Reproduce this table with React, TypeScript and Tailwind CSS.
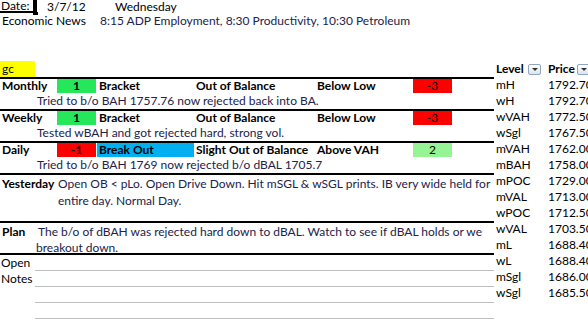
import clsx from "clsx";

type Band = {
  label: string;
  score: string;
  scoreBg: string;
  setup: string;
  setupBg?: string;
  balance: string;
  where: string;
  trend: string;
  trendBg: string;
  note: string;
};

const bands: Band[] = [
  {
    label: "Monthly",
    score: "1",
    scoreBg: "bg-[#26e65a]",
    setup: "Bracket",
    balance: "Out of Balance",
    where: "Below Low",
    trend: "-3",
    trendBg: "bg-[#ff0000]",
    note: "Tried to b/o BAH 1757.76 now rejected back into BA.",
  },
  {
    label: "Weekly",
    score: "1",
    scoreBg: "bg-[#26e65a]",
    setup: "Bracket",
    balance: "Out of Balance",
    where: "Below Low",
    trend: "-3",
    trendBg: "bg-[#ff0000]",
    note: "Tested wBAH and got rejected hard, strong vol.",
  },
  {
    label: "Daily",
    score: "-1",
    scoreBg: "bg-[#ff0000]",
    setup: "Break Out",
    setupBg: "bg-[#00b0f0]",
    balance: "Slight Out of Balance",
    where: "Above VAH",
    trend: "2",
    trendBg: "bg-[#95f595]",
    note: "Tried to b/o BAH 1769 now rejected b/o dBAL 1705.7",
  },
];

const levels = [
  ["mH", "1792.70"],
  ["wH", "1792.70"],
  ["wVAH", "1772.50"],
  ["wSgl", "1767.50"],
  ["mVAH", "1762.00"],
  ["mBAH", "1758.00"],
  ["mPOC", "1729.00"],
  ["mVAL", "1713.00"],
  ["wPOC", "1712.50"],
  ["wVAL", "1703.50"],
  ["mL", "1688.40"],
  ["wL", "1688.40"],
  ["mSgl", "1686.00"],
  ["wSgl", "1685.50"],
];

const FilterButton = () => (
  <div className="w-[13px] h-[11px] shrink-0 border border-[#8ea4c2] rounded-[2px] bg-gradient-to-b from-white to-[#dde4ee] flex items-center justify-center">
    <div className="w-0 h-0 border-l-[3px] border-r-[3px] border-t-[3px] border-l-transparent border-r-transparent border-t-[#333]" />
  </div>
);

const BandRows = ({ band }: { band: Band }) => (
  <div className="border-t-2 border-black">
    <div className="h-[14px] flex items-center font-bold whitespace-nowrap">
      <div className="w-[57px] pl-[2px]">{band.label}</div>
      <div className={clsx("w-[39px] h-full flex items-center justify-center", band.scoreBg)}>
        {band.score}
      </div>
      <div className={clsx("w-[97px] h-full ml-[1px] pl-[2px] flex items-center", band.setupBg)}>
        {band.setup}
      </div>
      <div className="w-[121px] pl-[2px]">{band.balance}</div>
      <div className="w-[98px] pl-[2px]">{band.where}</div>
      <div className={clsx("w-[39px] h-full flex items-center justify-center font-normal", band.trendBg)}>
        {band.trend}
      </div>
    </div>
    <div className="h-4 flex items-center pl-[37px] text-[#22224a] whitespace-nowrap">{band.note}</div>
  </div>
);

const App = () => {
  return (
    <div className="w-[588px] h-[334px] overflow-hidden bg-white text-black text-[12px] leading-4 [font-family:Lato,'Liberation_Sans',sans-serif]">
      {/* header rows */}
      <div className="h-[13px] flex items-center whitespace-nowrap">
        <div className="w-[33px] h-full border-b-2 border-black pl-[1px] flex items-center">Date:</div>
        <div className="w-[4px] h-[15px] self-start flex flex-col">
          <div className="h-[12px] bg-black" />
          <div className="h-[3px] w-[5px] bg-black" />
        </div>
        <div className="w-[78px] pl-[10px]">3/7/12</div>
        <div>Wednesday</div>
      </div>
      <div className="h-4 flex items-center whitespace-nowrap">
        <div className="w-[100px] pl-[2px]">Economic News</div>
        <div className="text-[#22224a]">8:15 ADP Employment, 8:30 Productivity, 10:30 Petroleum</div>
      </div>
      <div className="h-8" />

      <div className="flex">
        {/* main sheet */}
        <div className="w-[495px] shrink-0 pr-[1px]">
          <div className="h-4 flex items-center">
            <div className="w-[35px] h-full bg-[#ffff00] pl-[2px] flex items-center">gc</div>
          </div>

          {bands.map((b) => (
            <BandRows key={b.label} band={b} />
          ))}

          <div className="h-12 border-t-2 border-black flex leading-[17px]">
            <div className="w-[58px] pl-[2px] font-bold">Yesterday</div>
            <div className="text-[#22224a] whitespace-nowrap">
              <div>Open OB &lt; pLo. Open Drive Down. Hit mSGL &amp; wSGL prints. IB very wide held for</div>
              <div>entire day. Normal Day.</div>
            </div>
          </div>

          <div className="h-8 border-t-2 border-black flex pt-[1px] leading-4">
            <div className="w-[36px] pl-[2px] font-bold">Plan</div>
            <div className="text-[#22224a] whitespace-nowrap">
              <div className="pl-[2px]">The b/o of dBAH was rejected hard down to dBAL. Watch to see if dBAL holds or we</div>
              <div>breakout down.</div>
            </div>
          </div>

          <div className="border-t-2 border-black flex">
            <div className="w-[35px] shrink-0 pl-[1px]">
              <div className="h-4 flex items-center">Open</div>
              <div className="h-4 flex items-center">Notes</div>
            </div>
            <div className="flex-1">
              {[0, 1, 2, 3, 4].map((i) => (
                <div key={i} className="h-4 border-b border-[#bdbdbd]" />
              ))}
            </div>
          </div>
        </div>

        {/* level table */}
        <div className="flex-1 whitespace-nowrap">
          <div className="h-4 flex items-center font-bold">
            <div className="w-[53px] flex items-center gap-[1px]">
              <span className="w-[32px] pl-[1px]">Level</span>
              <FilterButton />
            </div>
            <div className="flex items-center">
              <span className="w-[29px]">Price</span>
              <FilterButton />
            </div>
          </div>
          {levels.map(([name, price], i) => (
            <div key={i} className="h-4 flex items-center">
              <div className="w-[53px] pl-[1px]">{name}</div>
              <div>{price}</div>
            </div>
          ))}
        </div>
      </div>
    </div>
  );
};

export default App;
